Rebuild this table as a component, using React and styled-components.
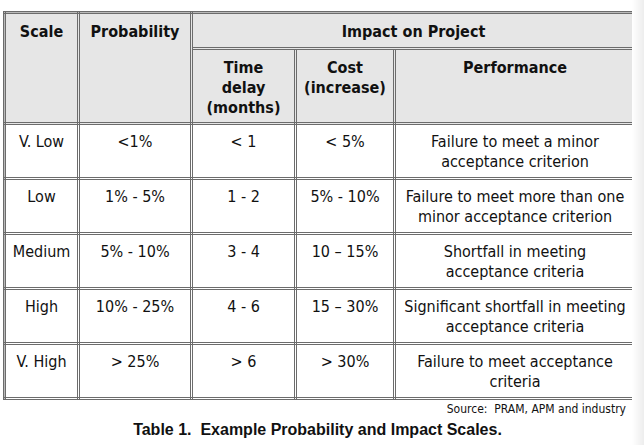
import React from "react";
import styled, { createGlobalStyle } from "styled-components";

const GlobalStyle = createGlobalStyle`
  html, body {
    margin: 0;
    padding: 0;
    background: #ffffff;
  }
`;

const Page = styled.div`
  display: flex;
  width: 644px;
  height: 445px;
  overflow: hidden;
`;

const Sheet = styled.div`
  width: 632px;
  padding: 11px 0 0 3px;
  box-sizing: border-box;
  display: flex;
  flex-direction: column;
`;

const Shade = styled.div`
  flex: 1;
  background: linear-gradient(to right, #ffffff, #ededed);
`;

const Table = styled.table`
  width: 631px;
  table-layout: fixed;
  border-collapse: collapse;
  background: #b9b9b9;
  font-family: "DejaVu Sans Condensed", "DejaVu Sans", sans-serif;
  font-size: 16px;
  color: #111;
`;

const Cell = styled.td`
  border: 3px double #6c6c6c;
  background: ${(p) => (p.$head ? "#e6e6e6" : "#ffffff")};
  font-weight: ${(p) => (p.$head ? "bold" : "normal")};
  text-align: center;
  vertical-align: top;
  padding: ${(p) => (p.$head ? "8px 4px 0" : "7px 4px 0")};
  line-height: 20px;
  white-space: nowrap;
`;

const Row = styled.tr`
  height: ${(p) => p.$h}px;
`;

const Source = styled.div`
  font-family: "DejaVu Sans Condensed", "DejaVu Sans", sans-serif;
  font-size: 12px;
  color: #111;
  text-align: right;
  padding: 2px 6px 0 0;
  line-height: 15px;
`;

const Caption = styled.div`
  font-family: "Liberation Sans", Arial, sans-serif;
  font-weight: bold;
  font-size: 16px;
  color: #111;
  text-align: center;
  margin-top: 4px;
`;

const rows = [
  ["V. Low", "<1%", "< 1", "< 5%", ["Failure to meet a minor", "acceptance criterion"]],
  ["Low", "1% - 5%", "1 - 2", "5% - 10%", ["Failure to meet more than one", "minor acceptance criterion"]],
  ["Medium", "5% - 10%", "3 - 4", "10 – 15%", ["Shortfall in meeting", "acceptance criteria"]],
  ["High", "10% - 25%", "4 - 6", "15 – 30%", ["Significant shortfall in meeting", "acceptance criteria"]],
  ["V. High", "> 25%", "> 6", "> 30%", ["Failure to meet acceptance", "criteria"]],
];

const Lines = ({ lines }) =>
  lines.map((l, i) => (
    <React.Fragment key={i}>
      {i > 0 && <br />}
      {l}
    </React.Fragment>
  ));

export default function App() {
  return (
    <Page>
      <GlobalStyle />
      <Sheet>
        <Table>
          <colgroup>
            <col style={{ width: 74 }} />
            <col style={{ width: 113 }} />
            <col style={{ width: 104 }} />
            <col style={{ width: 99 }} />
            <col style={{ width: 241 }} />
          </colgroup>
          <thead>
            <Row $h={36}>
              <Cell as="th" $head rowSpan={2}>Scale</Cell>
              <Cell as="th" $head rowSpan={2}>Probability</Cell>
              <Cell as="th" $head colSpan={3}>Impact on Project</Cell>
            </Row>
            <Row $h={75}>
              <Cell as="th" $head><Lines lines={["Time", "delay", "(months)"]} /></Cell>
              <Cell as="th" $head><Lines lines={["Cost", "(increase)"]} /></Cell>
              <Cell as="th" $head>Performance</Cell>
            </Row>
          </thead>
          <tbody>
            {rows.map((r) => (
              <Row $h={55} key={r[0]}>
                {r.map((c, i) => (
                  <Cell key={i}>{Array.isArray(c) ? <Lines lines={c} /> : c}</Cell>
                ))}
              </Row>
            ))}
          </tbody>
        </Table>
        <Source>Source:&nbsp; PRAM, APM and industry</Source>
        <Caption>Table 1.&nbsp; Example Probability and Impact Scales.</Caption>
      </Sheet>
      <Shade />
    </Page>
  );
}
